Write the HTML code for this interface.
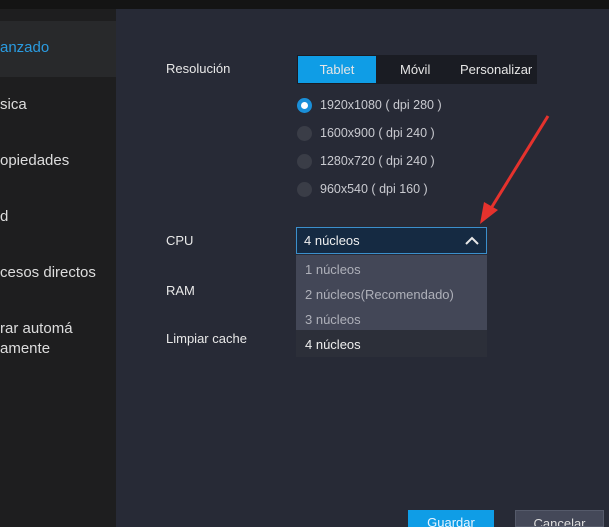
<!DOCTYPE html>
<html style="overflow:hidden;height:527px"><head><meta charset="utf-8"><style>
*{margin:0;padding:0;box-sizing:border-box}
body{width:609px;height:527px;overflow:hidden;background:#272a36;font-family:"Liberation Sans","DejaVu Sans",sans-serif;font-size:13px;color:#e6e6e6;position:relative}
.a{position:absolute}
.top{left:0;top:0;width:609px;height:9px;background:#141414}
.side{left:0;top:9px;width:116px;height:518px;background:#1e1e1f}
.act{left:0;top:21px;width:116px;height:56px;background:#28292b}
.si{left:0;font-size:14px;color:#ddd}
.lbl{left:166px;font-size:13px;color:#e8e8e8}
.seg{left:297px;top:55px;width:240px;height:29px;background:#1a1c23}
.r{left:297px;width:15px;height:15px;border-radius:50%;background:#3a3d47}
.rt{left:320px;font-size:12.5px;color:#c9cad0}
.dd{left:296px;top:227px;width:191px;height:27px;background:#152a42;border:1px solid #3b8fcc}
.list{left:296px;top:255px;width:191px;height:75px;background:#434757}
.it{left:305px;font-size:13px;color:#aeb0b9}
.btn{top:510px;height:30px;text-align:center;font-size:13px;line-height:26px}
</style></head><body>
<div class="a top"></div>
<div class="a side"></div>
<div class="a act"></div>
<div class="a si" style="top:39px;color:#2a9be0;font-size:15px">anzado</div>
<div class="a si" style="top:96px;font-size:15px">sica</div>
<div class="a si" style="top:152px;font-size:15px">opiedades</div>
<div class="a si" style="top:208px;font-size:15px">d</div>
<div class="a si" style="top:264px;font-size:15px">cesos directos</div>
<div class="a si" style="top:320px;font-size:15px">rar automá</div>
<div class="a si" style="top:340px;font-size:15px">amente</div>

<div class="a lbl" style="top:61px">Resolución</div>
<div class="a seg"></div>
<div class="a" style="left:298px;top:56px;width:78px;height:27px;background:#0f9de6;text-align:center;line-height:27px">Tablet</div>
<div class="a" style="left:400px;top:62px">Móvil</div>
<div class="a" style="left:460px;top:62px">Personalizar</div>

<div class="a r" style="top:98px;background:#1a8fd8"></div>
<div class="a" style="left:301px;top:102px;width:7px;height:7px;border-radius:50%;background:#fff"></div>
<div class="a rt" style="top:98px">1920x1080 ( dpi 280 )</div>
<div class="a r" style="top:126px"></div><div class="a rt" style="top:126px">1600x900 ( dpi 240 )</div>
<div class="a r" style="top:154px"></div><div class="a rt" style="top:154px">1280x720 ( dpi 240 )</div>
<div class="a r" style="top:182px"></div><div class="a rt" style="top:182px">960x540 ( dpi 160 )</div>

<div class="a lbl" style="top:233px">CPU</div>
<div class="a lbl" style="top:283px">RAM</div>
<div class="a lbl" style="top:331px">Limpiar cache</div>

<div class="a dd"></div>
<div class="a" style="left:304px;top:233px;color:#f0f0f0">4 núcleos</div>
<svg class="a" style="left:464px;top:234px" width="16" height="12"><path d="M2 10 L8 4 L14 10" fill="none" stroke="#e8e8e8" stroke-width="2"/></svg>
<div class="a list"></div>
<div class="a" style="left:296px;top:330px;width:191px;height:27px;background:#2c2f39"></div>
<div class="a it" style="top:262px">1 núcleos</div>
<div class="a it" style="top:287px">2 núcleos(Recomendado)</div>
<div class="a it" style="top:312px">3 núcleos</div>
<div class="a it" style="top:337px;color:#eee">4 núcleos</div>

<svg class="a" style="left:470px;top:110px" width="90" height="120"><path d="M78 6 L20 100" stroke="#e5322d" stroke-width="3" fill="none"/><path d="M10 114 L14 92 L28 100 Z" fill="#e5322d"/></svg>

<div class="a btn" style="left:408px;width:86px;background:#0f9de6;color:#e8f4ff;height:17px;overflow:hidden">Guardar</div>
<div class="a btn" style="left:515px;width:89px;background:#444858;border:1px solid #555a6a;color:#ddd;height:17px;overflow:hidden">Cancelar</div>
</body></html>
